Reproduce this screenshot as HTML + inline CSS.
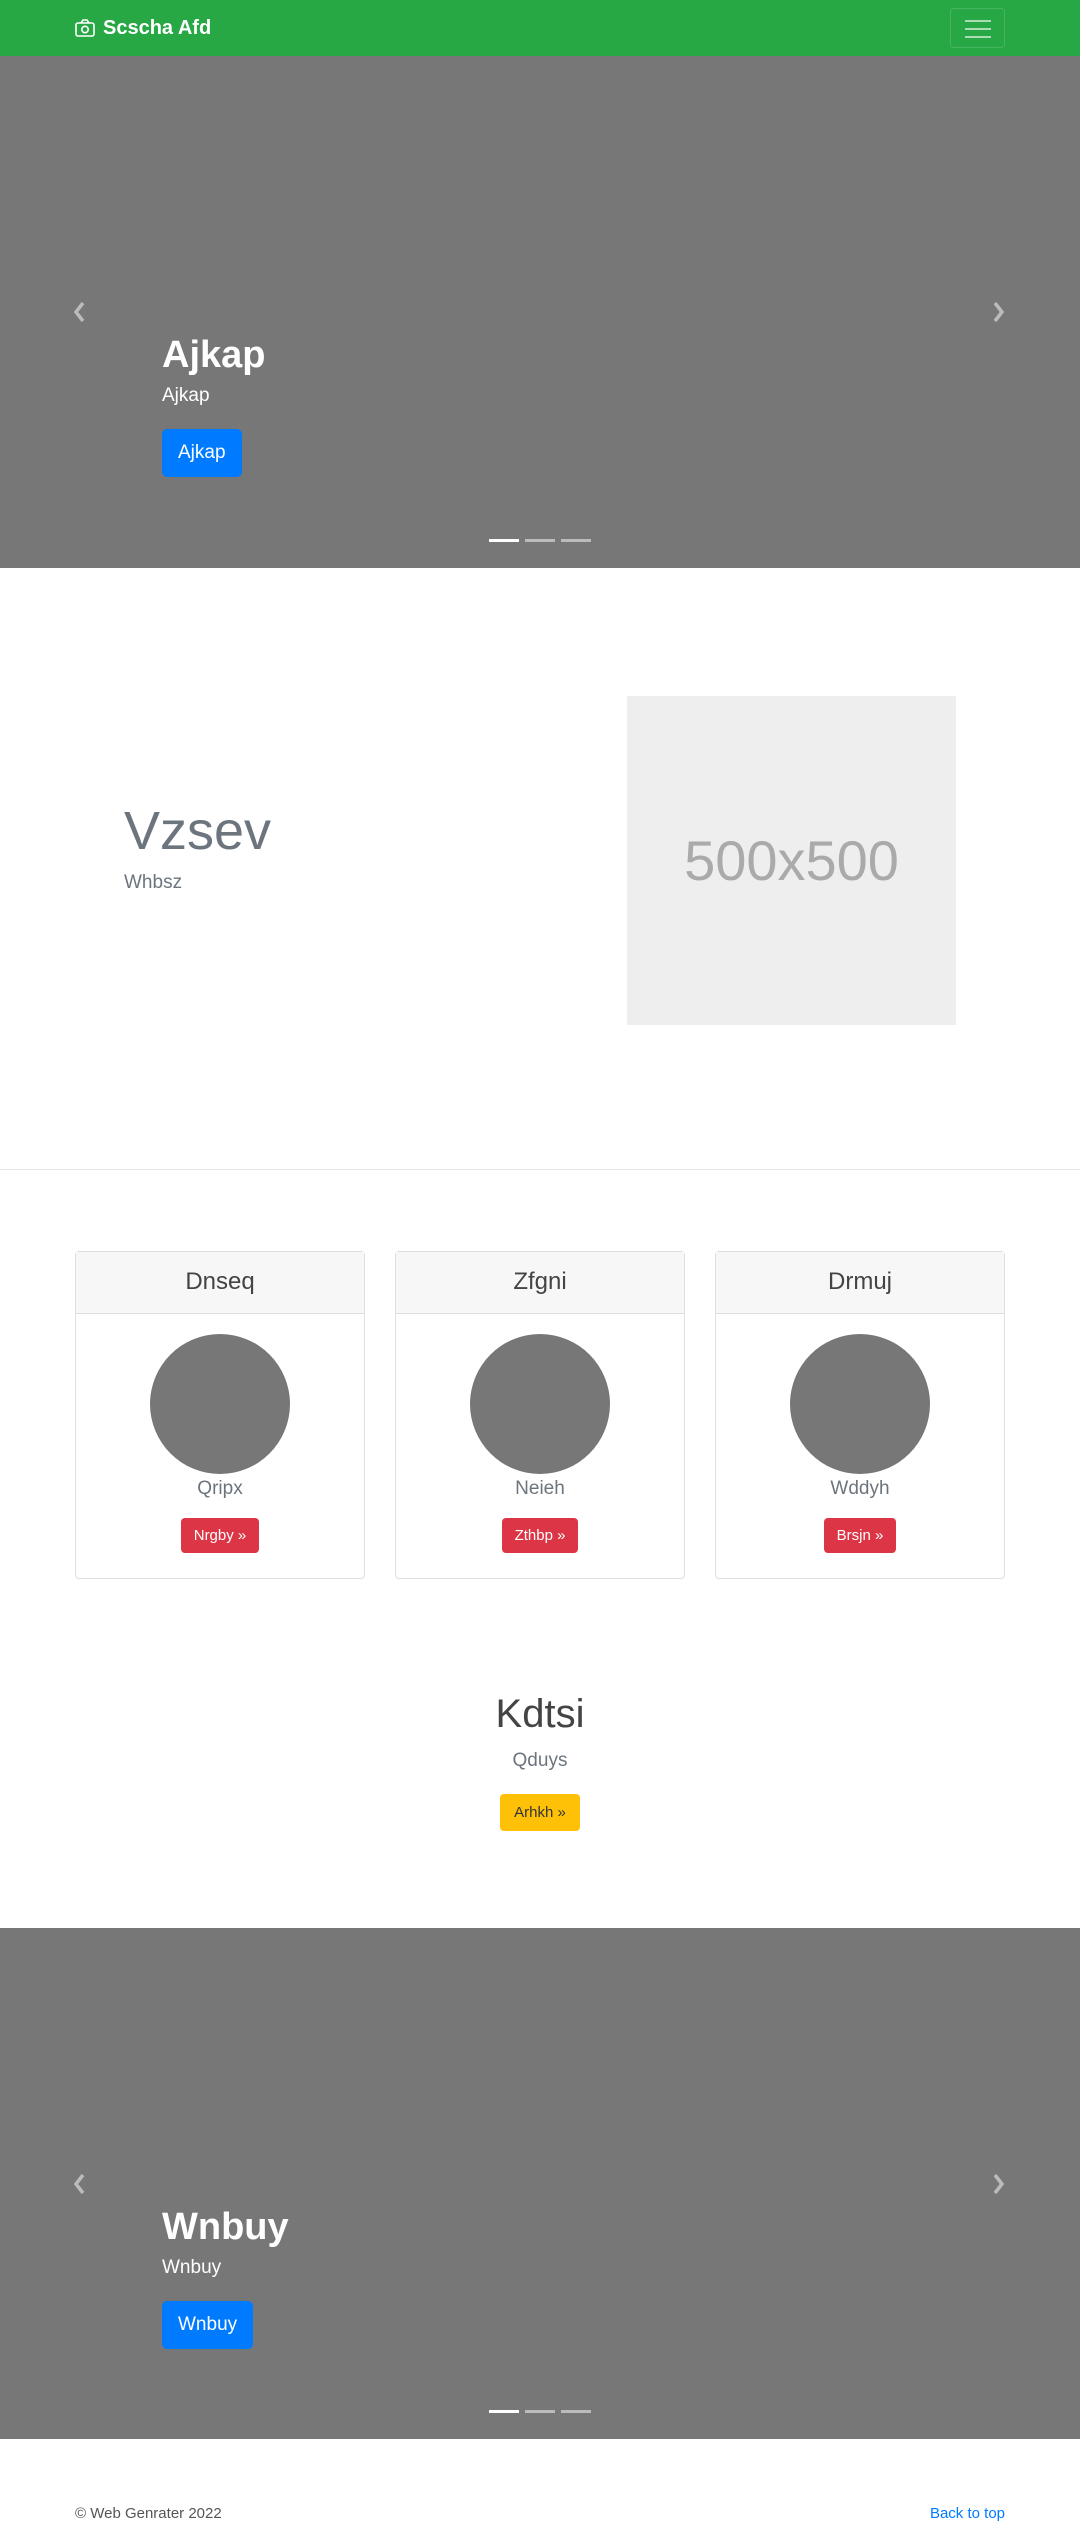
<!DOCTYPE html>
<html><head><meta charset="utf-8"><style>
*{box-sizing:border-box;margin:0;padding:0}
body{width:1080px;height:2526px;position:relative;font-family:"Liberation Sans",sans-serif;background:#fff;overflow:hidden}
.a{position:absolute}
.nav{left:0;top:0;width:1080px;height:56px;background:#28a745}
.car{left:0;width:1080px;background:#777}
.cap h1{color:#fff;font-size:38px;font-weight:bold;line-height:48px}
.cap p{color:#fff;font-size:19px;margin-top:6px}
.btnb{background:#007bff;color:#fff;font-size:19px;border-radius:5px;display:inline-block;padding:13px 16px}
.ind span{display:inline-block;width:30px;height:3px;background:rgba(255,255,255,.5);margin:0 3px;vertical-align:top}
.ind span:first-child{background:#fff}
.card{top:1251px;width:290px;height:328px;border:1px solid #dfdfdf;border-radius:4px;text-align:center}
.card .h{height:62px;background:#f7f7f7;border-bottom:1px solid #dfdfdf;font-size:24px;color:#444;line-height:60px}
.circ{width:140px;height:140px;border-radius:50%;background:#777;margin:20px auto 0}
.nm{color:#6c757d;font-size:19px;margin-top:4px;font-weight:300}
.rb{display:inline-block;background:#dc3545;color:#fff;font-size:15px;padding:9px 13px;border-radius:4px;margin-top:18px}
</style></head><body>
<div class="a nav">
 <svg class="a" style="left:75px;top:19px" width="20" height="18" viewBox="0 0 20 18"><rect x="1" y="4" width="18" height="13" rx="2" fill="none" stroke="#fff" stroke-width="1.6"/><path d="M6 4 L8 1 H12 L14 4" fill="none" stroke="#fff" stroke-width="1.6"/><circle cx="10" cy="10.5" r="3.2" fill="none" stroke="#fff" stroke-width="1.6"/></svg>
 <div class="a" style="left:103px;top:17px;color:#fff;font-weight:bold;font-size:20px">Scscha Afd</div>
 <div class="a" style="left:950px;top:8px;width:55px;height:40px;border:1px solid rgba(255,255,255,.15);border-radius:4px">
  <div class="a" style="left:14px;top:11px;width:26px;height:2px;background:rgba(255,255,255,.6)"></div>
  <div class="a" style="left:14px;top:19px;width:26px;height:2px;background:rgba(255,255,255,.6)"></div>
  <div class="a" style="left:14px;top:27px;width:26px;height:2px;background:rgba(255,255,255,.6)"></div>
 </div>
</div>
<div class="a car" style="top:56px;height:512px">
 <svg class="a" style="left:72px;top:245px" width="14" height="22" viewBox="0 0 14 22"><path d="M11 2 L4 11 L11 20" fill="none" stroke="rgba(255,255,255,.5)" stroke-width="3.5"/></svg>
 <svg class="a" style="left:992px;top:245px" width="14" height="22" viewBox="0 0 14 22"><path d="M3 2 L10 11 L3 20" fill="none" stroke="rgba(255,255,255,.5)" stroke-width="3.5"/></svg>
 <div class="a cap" style="left:162px;top:275px"><h1>Ajkap</h1><p>Ajkap</p><div style="margin-top:22px"><span class="btnb">Ajkap</span></div></div>
 <div class="a ind" style="left:486px;top:483px;width:108px;height:3px;line-height:0"><span></span><span></span><span></span></div>
</div>
<div class="a" style="left:124px;top:800px;font-size:54px;color:#6c757d;font-weight:300">Vzsev</div>
<div class="a" style="left:124px;top:872px;font-size:19px;color:#6c757d;font-weight:300">Whbsz</div>
<div class="a" style="left:627px;top:696px;width:329px;height:329px;background:#eee;color:#aaa;font-size:56px;text-align:center;line-height:329px">500x500</div>
<div class="a" style="left:0;top:1169px;width:1080px;height:1px;background:#e5e5e5"></div>
<div class="a card" style="left:75px"><div class="h">Dnseq</div><div class="circ"></div><div class="nm">Qripx</div><span class="rb">Nrgby »</span></div>
<div class="a card" style="left:395px"><div class="h">Zfgni</div><div class="circ"></div><div class="nm">Neieh</div><span class="rb">Zthbp »</span></div>
<div class="a card" style="left:715px"><div class="h">Drmuj</div><div class="circ"></div><div class="nm">Wddyh</div><span class="rb">Brsjn »</span></div>
<div class="a" style="left:0;top:1692px;width:1080px;text-align:center;font-size:40px;color:#444">Kdtsi</div>
<div class="a" style="left:0;top:1750px;width:1080px;text-align:center;font-size:19px;color:#6c757d;font-weight:300">Qduys</div>
<div class="a" style="left:500px;top:1794px;width:80px;height:37px;background:#ffc107;border-radius:4px;color:#333;font-size:15px;text-align:center;line-height:37px">Arhkh »</div>
<div class="a car" style="top:1928px;height:511px">
 <svg class="a" style="left:72px;top:245px" width="14" height="22" viewBox="0 0 14 22"><path d="M11 2 L4 11 L11 20" fill="none" stroke="rgba(255,255,255,.5)" stroke-width="3.5"/></svg>
 <svg class="a" style="left:992px;top:245px" width="14" height="22" viewBox="0 0 14 22"><path d="M3 2 L10 11 L3 20" fill="none" stroke="rgba(255,255,255,.5)" stroke-width="3.5"/></svg>
 <div class="a cap" style="left:162px;top:275px"><h1>Wnbuy</h1><p>Wnbuy</p><div style="margin-top:22px"><span class="btnb">Wnbuy</span></div></div>
 <div class="a ind" style="left:486px;top:482px;width:108px;height:3px;line-height:0"><span></span><span></span><span></span></div>
</div>
<div class="a" style="left:75px;top:2505px;font-size:15px;color:#555">© Web Genrater 2022</div>
<div class="a" style="right:75px;top:2505px;font-size:15px;color:#007bff">Back to top</div>
</body></html>
